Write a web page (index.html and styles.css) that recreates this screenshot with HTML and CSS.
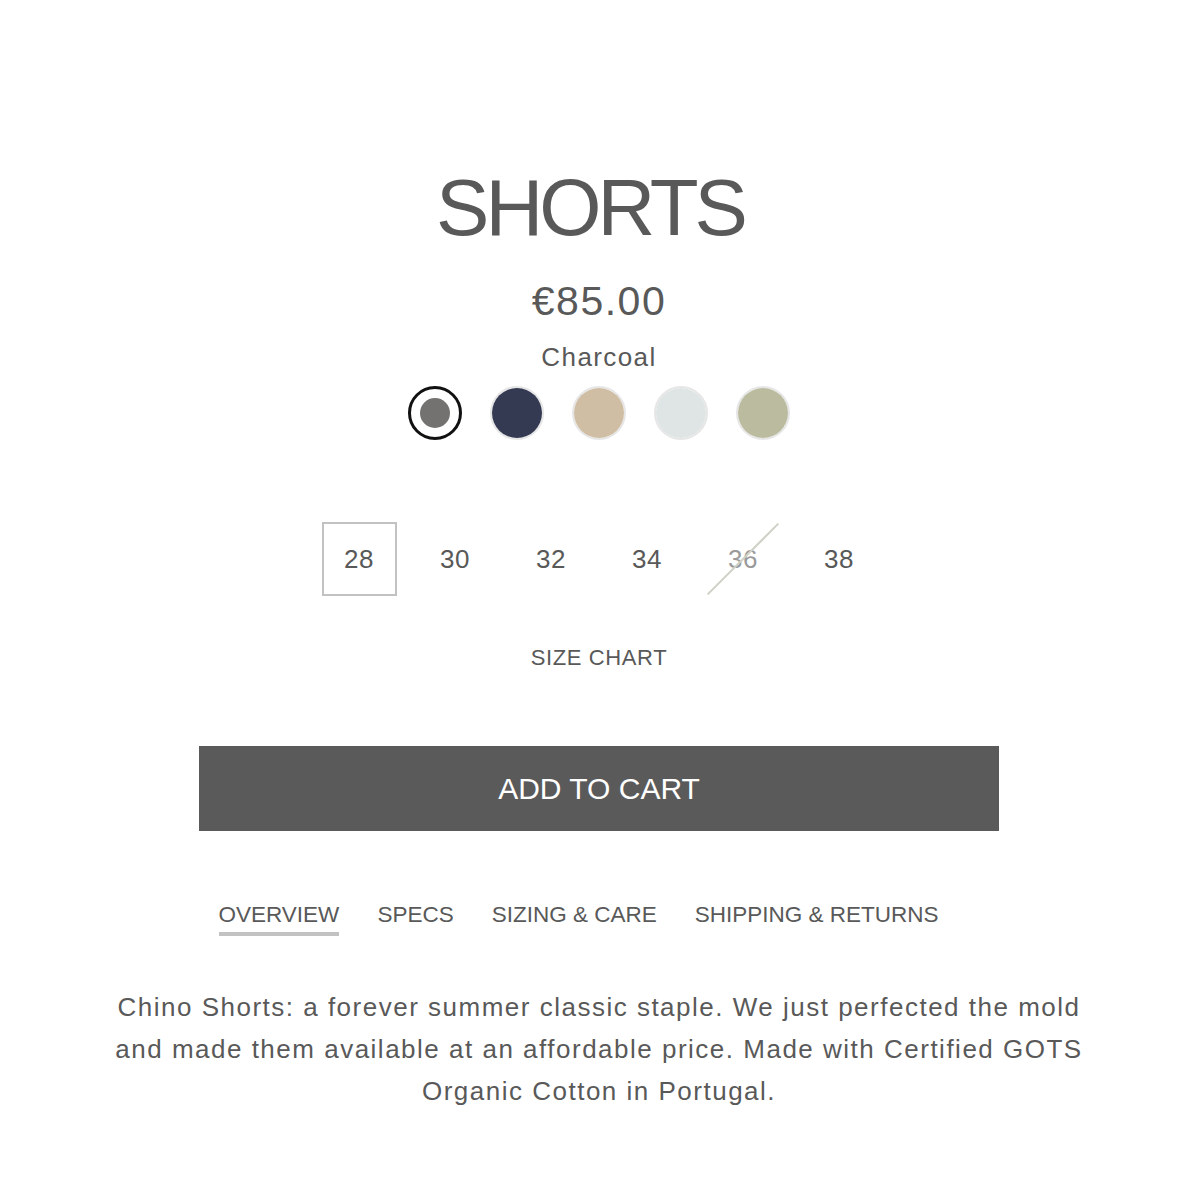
FILE: index.html
```html
<!DOCTYPE html>
<html>
<head>
<meta charset="utf-8">
<link rel="stylesheet" href="styles.css">
</head>
<body>
<main class="product">
  <h1 class="title">SHORTS</h1>
  <div class="price">€85.00</div>
  <div class="color-name">Charcoal</div>
  <div class="swatches">
    <span class="swatch selected"><span class="dot" style="background:#737270"></span></span>
    <span class="swatch"><span class="dot" style="background:#343a52"></span></span>
    <span class="swatch"><span class="dot" style="background:#cfbea4"></span></span>
    <span class="swatch"><span class="dot" style="background:#dfe5e4"></span></span>
    <span class="swatch"><span class="dot" style="background:#bbbb9f"></span></span>
  </div>
  <div class="sizes">
    <span class="size active">28</span>
    <span class="size">30</span>
    <span class="size">32</span>
    <span class="size">34</span>
    <span class="size soldout">36</span>
    <span class="size">38</span>
  </div>
  <div class="size-chart">SIZE CHART</div>
  <button class="add-to-cart">ADD TO CART</button>
  <nav class="tabs">
    <span class="tab active">OVERVIEW</span>
    <span class="tab">SPECS</span>
    <span class="tab">SIZING &amp; CARE</span>
    <span class="tab">SHIPPING &amp; RETURNS</span>
  </nav>
  <p class="desc">Chino Shorts: a forever summer classic staple. We just perfected the mold and made them available at an affordable price. Made with Certified GOTS Organic Cotton in Portugal.</p>
</main>
</body>
</html>
```

FILE: styles.css
```css
* { box-sizing: border-box; }
html, body { margin: 0; padding: 0; background: #fff; }
body {
  font-family: "Liberation Sans", Arial, sans-serif;
  color: #595959;
}
.product {
  width: 1000px;
  margin: 0 auto;
  padding: 160px 0 80px;
  transform: translateX(5px);
  display: flex;
  flex-direction: column;
  align-items: center;
}
.title {
  margin: 0 18px 0 0;
  font-weight: 400;
  font-size: 80px;
  line-height: 96px;
  letter-spacing: -4px;
}
.price {
  margin-top: 21px;
  font-size: 41px;
  line-height: 48px;
  letter-spacing: 1.5px;
}
.color-name {
  margin-top: 15px;
  font-size: 26px;
  line-height: 34px;
  letter-spacing: 1.4px;
}
.swatches {
  margin-top: 12px;
  display: flex;
  gap: 28px;
}
.swatch {
  width: 54px;
  height: 54px;
  border-radius: 50%;
  border: 2px solid #e6e6e6;
  display: flex;
  align-items: center;
  justify-content: center;
}
.swatch .dot {
  width: 50px;
  height: 50px;
  border-radius: 50%;
}
.swatch.selected {
  border: 3px solid #111;
}
.swatch.selected .dot {
  width: 30px;
  height: 30px;
}
.sizes {
  margin-top: 82px;
  display: flex;
  gap: 21px;
}
.size {
  position: relative;
  width: 75px;
  height: 74px;
  display: flex;
  align-items: center;
  justify-content: center;
  font-size: 26px;
  letter-spacing: 0.5px;
  border: 2px solid transparent;
}
.size.active { border-color: #c2c2c2; }
.size.soldout { color: #9a9a9a; }
.size.soldout::after {
  content: "";
  position: absolute;
  left: 50%;
  top: 50%;
  width: 100px;
  height: 2px;
  background: #cfd0c6;
  transform: translate(-50%, -50%) rotate(-45deg);
}
.size-chart {
  margin-top: 48px;
  font-size: 22px;
  line-height: 28px;
  letter-spacing: 0.6px;
}
.add-to-cart {
  margin-top: 74px;
  width: 800px;
  height: 85px;
  border: 0;
  background: #5a5a5a;
  color: #fff;
  font-family: inherit;
  font-size: 30px;
  letter-spacing: 0;
}
.tabs {
  margin: 69px 41px 0 0;
  display: flex;
  gap: 38px;
}
.tab {
  font-size: 22.5px;
  line-height: 30px;
  padding-bottom: 2px;
  border-bottom: 4px solid transparent;
}
.tab.active { border-bottom-color: #c2c2c2; }
.desc {
  margin: 50px 0 0;
  text-align: center;
  font-size: 26px;
  line-height: 42px;
  letter-spacing: 1.5px;
}
```
